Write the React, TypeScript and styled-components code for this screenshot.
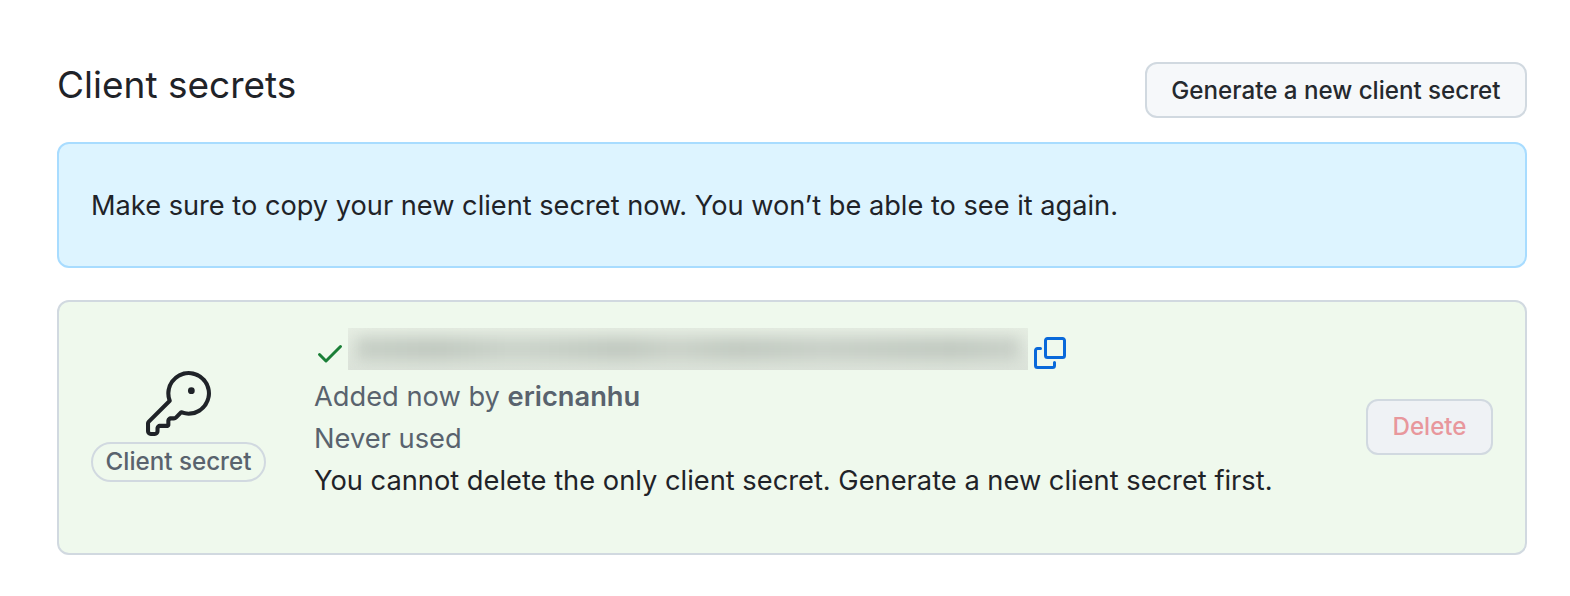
import styled, { createGlobalStyle } from "styled-components";
import { GoKey } from "react-icons/go";

const GlobalStyle = createGlobalStyle`
  body {
    margin: 0;
    background: #ffffff;
    color: #1f2328;
    font-family: Inter, "Liberation Sans", sans-serif;
  }
`;

const Page = styled.div`
  box-sizing: border-box;
  height: 596px;
  padding: 62px 43px 0 57px;
  overflow: hidden;
`;

const Header = styled.div`
  display: flex;
  justify-content: space-between;
  align-items: flex-start;
  margin-bottom: 24px;
`;

const Title = styled.h2`
  margin: 0;
  font-size: 37px;
  line-height: 46px;
  font-weight: 400;
`;

const Button = styled.button`
  box-sizing: border-box;
  height: 56px;
  padding: 0 24.5px;
  border: 2px solid #d1d9e0;
  border-radius: 12px;
  background: #f6f8fa;
  color: #25292e;
  font-family: inherit;
  font-size: 24.15px;
  font-weight: 500;
`;

const DeleteButton = styled(Button)`
  margin-bottom: 2px;
  background: #eff2f5;
  color: #e8979c;
`;

const Notice = styled.div`
  box-sizing: border-box;
  height: 126px;
  display: flex;
  align-items: center;
  padding: 0 32px;
  margin-bottom: 32px;
  border: 2px solid #a8dcff;
  border-radius: 12px;
  background: #ddf4ff;
  font-size: 27.2px;
`;

const SecretCard = styled.div`
  box-sizing: border-box;
  height: 255px;
  display: flex;
  align-items: center;
  padding: 0 32px;
  border: 2px solid #d1d9e0;
  border-radius: 12px;
  background: #eff9ed;
`;

const KeyColumn = styled.div`
  width: 175px;
  margin: 0 48px 3px 0;
  display: flex;
  flex-direction: column;
  align-items: center;
  gap: 6px;
  color: #1f2328;
`;

const Pill = styled.span`
  box-sizing: border-box;
  height: 40px;
  padding: 0 13px;
  display: flex;
  align-items: center;
  border: 2px solid #d1d9e0;
  border-radius: 20px;
  color: #59636e;
  font-size: 24.2px;
  font-weight: 500;
  white-space: nowrap;
`;

const Details = styled.div`
  flex: 1;
  padding-bottom: 26px;
  font-size: 27.28px;
  line-height: 42px;
`;

const SecretRow = styled.div`
  display: flex;
  align-items: flex-end;
  height: 42px;
  margin-bottom: 6px;
`;

const Icon = styled.svg<{ $color: string }>`
  width: 32px;
  height: 32px;
  margin-bottom: 1px;
  flex: none;
  fill: ${(props) => props.$color};
`;

const Blurred = styled.div`
  width: 680px;
  height: 42px;
  margin: 0 6px 0 2px;
  overflow: hidden;
  background: linear-gradient(180deg, #e6eee3, #dce3da);
`;

const BlurredInk = styled.div`
  height: 24px;
  margin: 9px 8px;
  background: linear-gradient(
    90deg,
    #c8d0c7,
    #c1c9c0 12%,
    #ccd4cb 24%,
    #c1c9c0 40%,
    #cbd2c9 48%,
    #c2cac1 58%,
    #c9d0c8 70%,
    #c2cac1 90%,
    #cad1c9
  );
  filter: blur(7px);
`;

const Muted = styled.div`
  color: #59636e;
  & strong {
    font-weight: 600;
  }
`;

const App = () => (
  <Page>
    <GlobalStyle />
    <Header>
      <Title>Client secrets</Title>
      <Button>Generate a new client secret</Button>
    </Header>
    <Notice>Make sure to copy your new client secret now. You won’t be able to see it again.</Notice>
    <SecretCard>
      <KeyColumn>
        <GoKey size={65} />
        <Pill>Client secret</Pill>
      </KeyColumn>
      <Details>
        <SecretRow>
          <Icon $color="#1a7f37" viewBox="0 0 16 16">
            <path d="M13.78 4.22a.75.75 0 0 1 0 1.06l-7.25 7.25a.75.75 0 0 1-1.06 0L2.22 9.28a.751.751 0 0 1 .018-1.042.751.751 0 0 1 1.042-.018L6 10.94l6.72-6.72a.75.75 0 0 1 1.06 0Z" />
          </Icon>
          <Blurred>
            <BlurredInk />
          </Blurred>
          <Icon $color="#0969da" viewBox="0 0 16 16">
            <path d="M0 6.75C0 5.784.784 5 1.75 5h1.5a.75.75 0 0 1 0 1.5h-1.5a.25.25 0 0 0-.25.25v7.5c0 .138.112.25.25.25h7.5a.25.25 0 0 0 .25-.25v-1.5a.75.75 0 0 1 1.5 0v1.5A1.75 1.75 0 0 1 9.25 16h-7.5A1.75 1.75 0 0 1 0 14.25Z" />
            <path d="M5 1.75C5 .784 5.784 0 6.75 0h7.5C15.216 0 16 .784 16 1.75v7.5A1.75 1.75 0 0 1 14.25 11h-7.5A1.75 1.75 0 0 1 5 9.25Zm1.75-.25a.25.25 0 0 0-.25.25v7.5c0 .138.112.25.25.25h7.5a.25.25 0 0 0 .25-.25v-7.5a.25.25 0 0 0-.25-.25Z" />
          </Icon>
        </SecretRow>
        <Muted>
          Added now by <strong>ericnanhu</strong>
        </Muted>
        <Muted>Never used</Muted>
        <div>You cannot delete the only client secret. Generate a new client secret first.</div>
      </Details>
      <DeleteButton>Delete</DeleteButton>
    </SecretCard>
  </Page>
);

export default App;
